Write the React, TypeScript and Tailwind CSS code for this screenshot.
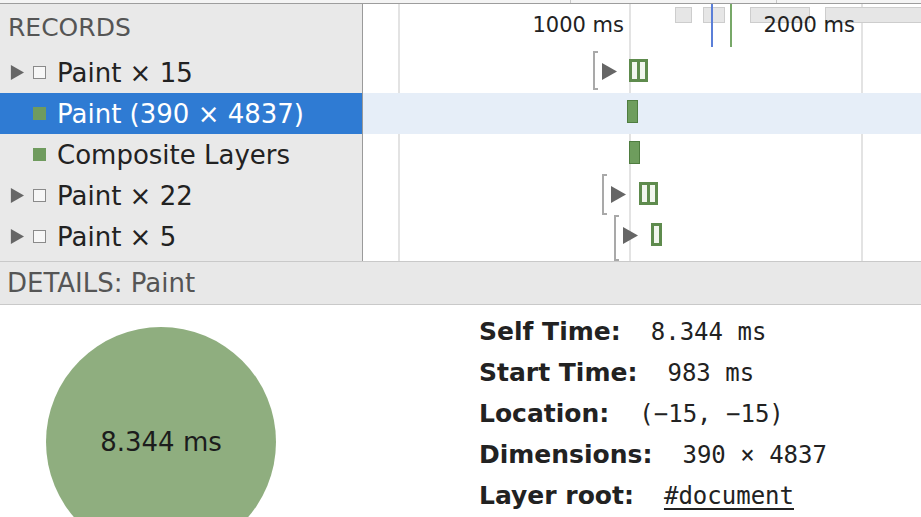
import type { ReactNode } from "react"

type Rec = {
  label: string
  expandable: boolean
  filled: boolean
  selected?: boolean
}

const RECORDS: Rec[] = [
  { label: "Paint × 15", expandable: true, filled: false },
  { label: "Paint (390 × 4837)", expandable: false, filled: true, selected: true },
  { label: "Composite Layers", expandable: false, filled: true },
  { label: "Paint × 22", expandable: true, filled: false },
  { label: "Paint × 5", expandable: true, filled: false },
]

const DETAILS = [
  { k: "Self Time:", v: "8.344 ms" },
  { k: "Start Time:", v: "983 ms" },
  { k: "Location:", v: "(−15, −15)" },
  { k: "Dimensions:", v: "390 × 4837" },
  { k: "Layer root:", v: "#document", link: true },
]

function Caret({ className = "" }: { className?: string }) {
  return (
    <svg width="16" height="17" viewBox="0 0 16 17" className={className}>
      <polygon points="1,0 16,8.5 1,17" fill="#666" />
    </svg>
  )
}

function Bracket({ left, top, height }: { left: number; top: number; height: number }) {
  return (
    <div
      className="absolute w-[5px] border-y-2 border-l-2 border-[#a9a9a9]"
      style={{ left, top, height }}
    />
  )
}

function Group({ left, bars }: { left: number; bars: number }) {
  return (
    <div
      className="absolute top-[7px] flex h-[23px] gap-[3px] border-[3px] border-[#5e8b4d] bg-[#5e8b4d]"
      style={{ left }}
    >
      {Array.from({ length: bars }).map((_, i) => (
        <div key={i} className="w-[5px] bg-[#f1f6ee]" />
      ))}
    </div>
  )
}

function Bar({ left }: { left: number }) {
  return (
    <div
      className="absolute top-[7px] h-[23px] w-[11px] border border-[#4f7d40] bg-[#6e9d5d]"
      style={{ left }}
    />
  )
}

function TimelineRow({ selected, children }: { selected?: boolean; children?: ReactNode }) {
  return (
    <div className={`relative h-[41px] ${selected ? "bg-[#e6eef8]" : ""}`}>{children}</div>
  )
}

export default function App() {
  return (
    <div className="h-[517px] w-[921px] overflow-hidden bg-white font-['DejaVu_Sans',sans-serif] text-[#222]">
      {/* top edge */}
      <div className="relative h-[4px] border-b border-[#9d9d9d] bg-[#f4f4f4]">
        <div className="absolute left-[570px] top-0 h-[3px] w-px bg-[#c8c8c8]" />
        <div className="absolute left-[776px] top-0 h-[3px] w-px bg-[#c8c8c8]" />
      </div>

      <div className="flex h-[257px]">
        {/* records list */}
        <div className="w-[363px] shrink-0 border-r border-[#9a9a9a] bg-[#e9e9e9]">
          <div className="flex h-[48px] items-center pl-[8px] text-[25px] text-[#555]">RECORDS</div>
          {RECORDS.map((r) => (
            <div
              key={r.label}
              className={`flex h-[41px] items-center text-[26px] ${
                r.selected ? "bg-[#2f7bd3] text-white" : ""
              }`}
            >
              <div className="flex w-[33px] justify-center pl-[1px]">
                {r.expandable && <Caret className="h-[15px] w-[14px]" />}
              </div>
              <div
                className={`h-[13px] w-[13px] ${
                  r.filled ? "bg-[#6f9b5e]" : "border border-[#8a8a8a] bg-[#f7f7f7]"
                }`}
              />
              <span className="ml-[11px] leading-none">{r.label}</span>
            </div>
          ))}
        </div>

        {/* timeline */}
        <div className="relative flex-1 overflow-hidden">
          <div className="absolute left-[35px] top-0 h-full w-[2px] bg-[#e3e3e3]" />
          <div className="absolute left-[266px] top-0 h-full w-[2px] bg-[#e3e3e3]" />
          <div className="absolute left-[498px] top-0 h-full w-[2px] bg-[#e3e3e3]" />

          <div className="relative h-[48px]">
            <div className="absolute left-[312px] top-[3px] h-[16px] w-[17px] border border-[#cdcdcd] bg-[#e6e6e6]" />
            <div className="absolute left-[340px] top-[3px] h-[16px] w-[22px] border border-[#cdcdcd] bg-[#e6e6e6]" />
            <div className="absolute left-[387px] top-[3px] h-[16px] w-[60px] border border-[#cdcdcd] bg-[#e6e6e6]" />
            <div className="absolute left-[462px] top-[3px] h-[16px] w-[120px] border border-[#cdcdcd] bg-[#e6e6e6]" />
            <div className="absolute left-[348px] top-0 h-[43px] w-[2px] bg-[#5b7fd8]" />
            <div className="absolute left-[367px] top-0 h-[43px] w-[2px] bg-[#77a868]" />
            <div className="absolute right-[297px] top-[11px] text-[21px] leading-none">1000 ms</div>
            <div className="absolute right-[66px] top-[11px] text-[21px] leading-none">2000 ms</div>
          </div>

          <TimelineRow>
            <Bracket left={230} top={-1} height={39} />
            <Caret className="absolute left-[238px] top-[11px]" />
            <Group left={266} bars={2} />
          </TimelineRow>
          <TimelineRow selected>
            <Bar left={264} />
          </TimelineRow>
          <TimelineRow>
            <Bar left={266} />
          </TimelineRow>
          <TimelineRow>
            <Bracket left={239} top={-1} height={41} />
            <Caret className="absolute left-[247px] top-[11px]" />
            <Group left={276} bars={2} />
          </TimelineRow>
          <TimelineRow>
            <Bracket left={251} top={-1} height={46} />
            <Caret className="absolute left-[259px] top-[11px]" />
            <Group left={288} bars={1} />
          </TimelineRow>
        </div>
      </div>

      {/* details header */}
      <div className="flex h-[44px] items-center border-y border-[#c9c9c9] bg-[#e8e8e8] pl-[7px] text-[26px] text-[#555]">
        DETAILS: Paint
      </div>

      {/* details body */}
      <div className="flex">
        <div className="w-[479px] shrink-0 pl-[46px] pt-[22px]">
          <div className="flex h-[230px] w-[230px] items-center justify-center rounded-full bg-[#8fae7f] text-[26px] text-[#1c1c1c]">
            8.344 ms
          </div>
        </div>
        <div className="pt-[6px]">
          {DETAILS.map((d) => (
            <div key={d.k} className="flex h-[41px] items-center">
              <span className="text-[25px] font-bold">{d.k}</span>
              <span
                className={`ml-[30px] font-['DejaVu_Sans_Mono',monospace] text-[24px] ${
                  d.link ? "underline underline-offset-4" : ""
                }`}
              >
                {d.v}
              </span>
            </div>
          ))}
        </div>
      </div>
    </div>
  )
}
